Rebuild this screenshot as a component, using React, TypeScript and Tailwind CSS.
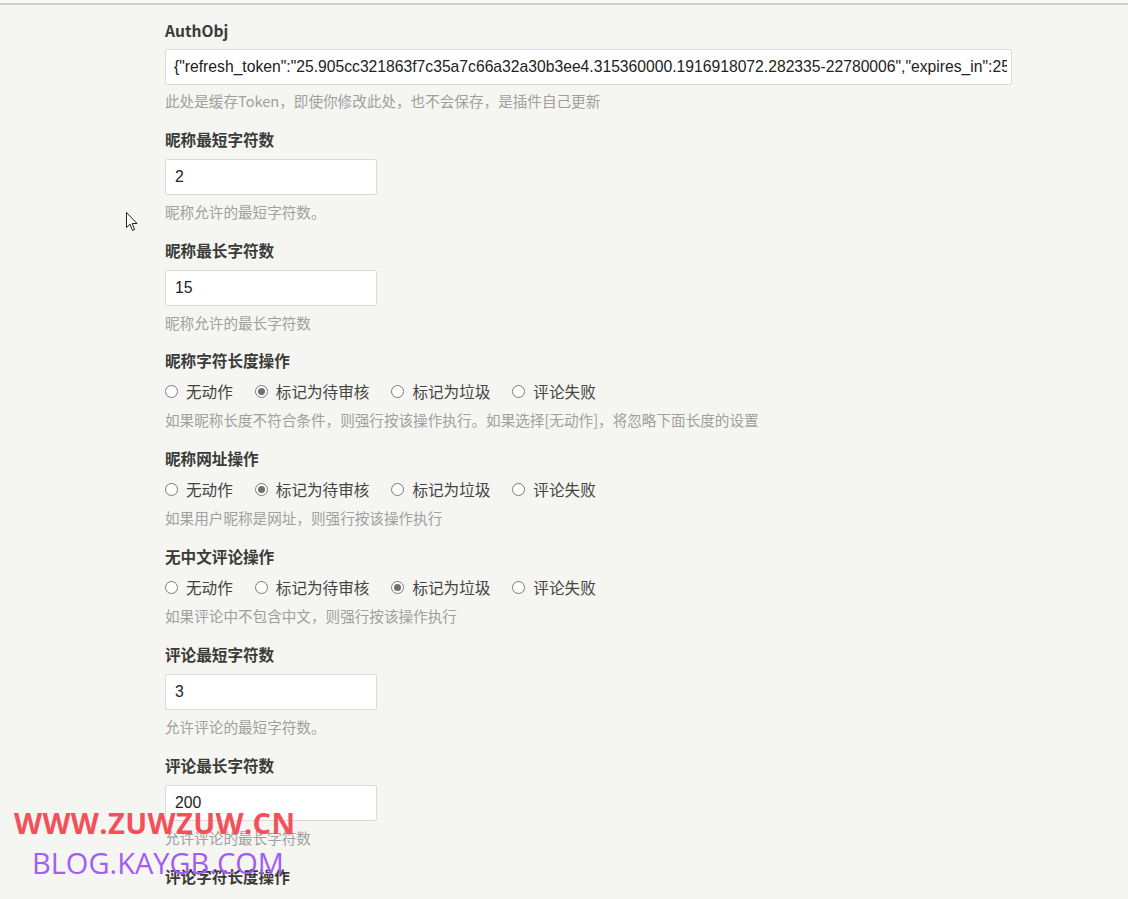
import React from 'react';

const options = ['无动作', '标记为待审核', '标记为垃圾', '评论失败'];

const authValue =
    '{"refresh_token":"25.905cc321863f7c35a7c66a32a30b3ee4.315360000.1916918072.282335-22780006","expires_in":2592000,"session_key":"","access_token":""}';

const Label = ({ children }: { children: React.ReactNode }) => (
    <div className="h-5 leading-5 text-[15.6px] font-bold text-[#3a3a3a]">{children}</div>
);

const Help = ({ children }: { children: React.ReactNode }) => (
    <div className="h-[18px] leading-[18px] text-[14.6px] text-[#a0a0a0]">{children}</div>
);

const TextField = ({ label, value, help, tight }: { label: string; value: string; help: string; tight?: boolean }) => (
    <div className={`flex flex-col ${tight ? 'pb-[18px]' : 'pb-[19px]'}`}>
        <Label>{label}</Label>
        <input
            readOnly
            value={value}
            className="mt-[10px] mb-2 h-9 w-[212px] rounded-[2px] border border-[#dadada] bg-white pl-[9px] pr-1 text-[15.8px] text-[#222] outline-none font-['Liberation_Sans',Arial,sans-serif]"
        />
        <Help>{help}</Help>
    </div>
);

const RadioField = ({ label, checked, help }: { label: string; checked: number; help: string }) => (
    <div className="flex flex-col pb-[19px]">
        <Label>{label}</Label>
        <div className="mt-[11px] mb-[10px] flex h-5 items-center text-[15.6px] text-[#444]">
            {options.map((opt, i) => (
                <label key={opt} className="mr-[22px] flex items-center">
                    <span className="mr-[8px] flex h-[13px] w-[13px] items-center justify-center rounded-full border border-[#7a7a7a] bg-white">
                        {i === checked && <span className="h-[7px] w-[7px] rounded-full bg-[#6f6f6f]" />}
                    </span>
                    <span className="leading-5">{opt}</span>
                </label>
            ))}
        </div>
        <Help>{help}</Help>
    </div>
);

export default function App() {
    return (
        <div className="relative h-[899px] w-[1128px] overflow-hidden bg-[#f5f5f1] font-['Noto_Sans_CJK_SC','Liberation_Sans',sans-serif]">
            <div className="h-[3px] bg-[#fafafa]" />
            <div className="h-[2px] bg-[#cfcfcf]" />

            <div className="flex flex-col pl-[165px] pt-[15px]">
                <div className="flex flex-col pb-[19px]">
                    <Label>AuthObj</Label>
                    <input
                        readOnly
                        value={authValue}
                        className="mt-[9px] mb-[7px] h-9 w-[847px] rounded-[2px] border border-[#dadada] bg-white pl-[8px] pr-1 text-[15.7px] text-[#222] outline-none font-['Liberation_Sans',Arial,sans-serif]"
                    />
                    <Help>此处是缓存Token，即使你修改此处，也不会保存，是插件自己更新</Help>
                </div>

                <TextField label="昵称最短字符数" value="2" help="昵称允许的最短字符数。" />
                <TextField label="昵称最长字符数" value="15" help="昵称允许的最长字符数" tight />
                <RadioField
                    label="昵称字符长度操作"
                    checked={1}
                    help="如果昵称长度不符合条件，则强行按该操作执行。如果选择[无动作]，将忽略下面长度的设置"
                />
                <RadioField label="昵称网址操作" checked={1} help="如果用户昵称是网址，则强行按该操作执行" />
                <RadioField label="无中文评论操作" checked={2} help="如果评论中不包含中文，则强行按该操作执行" />
                <TextField label="评论最短字符数" value="3" help="允许评论的最短字符数。" />
                <TextField label="评论最长字符数" value="200" help="允许评论的最长字符数" />
                <Label>评论字符长度操作</Label>
            </div>

            {/* mouse cursor */}
            <svg className="absolute left-[126px] top-[212px]" width="12" height="20" viewBox="0 0 12 20">
                <path d="M0.5 0.5 L0.5 15.5 L4 12.2 L6.5 18.5 L8.6 17.6 L6.2 11.5 L11 11.5 Z" fill="#fff" stroke="#222" strokeWidth="1" strokeLinejoin="round" />
            </svg>

            {/* watermark */}
            <div className="absolute left-[14px] top-[803px] text-[29px] font-bold leading-[40px] text-[#f2505b] font-['Open_Sans','Liberation_Sans',sans-serif] tracking-[0.4px]">
                WWW.ZUWZUW.CN
            </div>
            <div className="absolute left-[32px] top-[843px] text-[29px] leading-[40px] text-[#a35cf5] font-['Open_Sans','Liberation_Sans',sans-serif]">
                BLOG.KAYGB.COM
            </div>
        </div>
    );
}
